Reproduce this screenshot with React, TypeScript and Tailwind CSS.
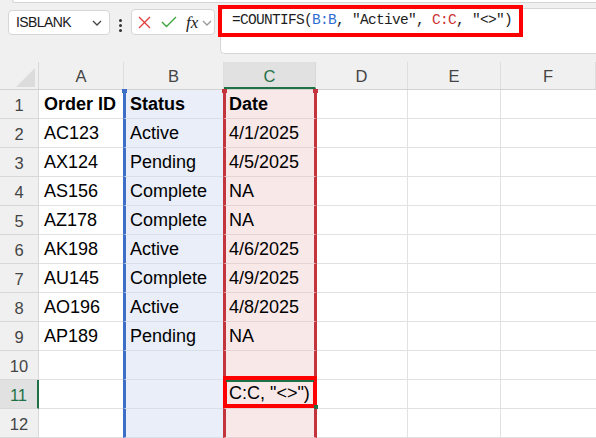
import React from 'react'

const rows = [
  ['Order ID', 'Status', 'Date'],
  ['AC123', 'Active', '4/1/2025'],
  ['AX124', 'Pending', '4/5/2025'],
  ['AS156', 'Complete', 'NA'],
  ['AZ178', 'Complete', 'NA'],
  ['AK198', 'Active', '4/6/2025'],
  ['AU145', 'Complete', '4/9/2025'],
  ['AO196', 'Active', '4/8/2025'],
  ['AP189', 'Pending', 'NA'],
  ['', '', ''],
  ['', '', ''],
  ['', '', ''],
]

function Chevron({ className = '' }: { className?: string }) {
  return (
    <svg className={className} width="10" height="6" viewBox="0 0 10 6" fill="none">
      <path d="M1 1l4 4 4-4" stroke="currentColor" strokeWidth="1.3" />
    </svg>
  )
}

function FormulaBar() {
  return (
    <div className="flex h-[52px]">
      {/* Name box */}
      <div className="ml-[8px] mt-[7px] flex h-[25px] w-[102px] items-center justify-between rounded-[4px] border border-[#d6d6d6] bg-white pl-[7px] pr-[7px]">
        <span className="text-[14px] tracking-[-0.6px] text-[#1a1a1a]">ISBLANK</span>
        <Chevron className="text-[#444]" />
      </div>

      {/* Dots */}
      <div className="ml-[9px] mt-[16px] flex w-[3px] flex-col gap-[2px]">
        <span className="h-[3px] w-[3px] rounded-full bg-[#333]" />
        <span className="h-[3px] w-[3px] rounded-full bg-[#333]" />
        <span className="h-[3px] w-[3px] rounded-full bg-[#333]" />
      </div>

      {/* Cancel / enter / fx */}
      <div className="ml-[9px] mt-[6px] flex h-[26px] w-[84px] items-center rounded-[4px] border border-[#d6d6d6] bg-white pl-[6px]">
        <svg width="13" height="13" viewBox="0 0 13 13" fill="none">
          <path d="M1 1l11 11M12 1L1 12" stroke="#e0403f" strokeWidth="1.4" />
        </svg>
        <svg className="ml-[10px]" width="16" height="12" viewBox="0 0 16 12" fill="none">
          <path d="M1 6l4.5 4.5L15 1" stroke="#3da43d" strokeWidth="1.4" />
        </svg>
        <span className="ml-[9px] font-['Liberation_Serif'] text-[17px] italic leading-none text-[#222]">fx</span>
        <Chevron className="ml-[4px] mt-[2px] text-[#999]" />
      </div>

      {/* Formula input */}
      <div className="relative ml-[5px] mt-[5px] flex-1">
        <div className="h-[46px] rounded-l-[5px] border border-r-0 border-[#d6d6d6] bg-white" />
        <div className="absolute -left-[2px] -top-[3px] flex h-[32px] w-[305px] items-center border-[4px] border-[#ff0000] pl-[10px]">
          <span className="whitespace-pre font-['Liberation_Mono'] text-[14.5px] tracking-[-0.7px] text-[#1e1e1e]">
            =COUNTIFS(<span className="text-[#2f6fd3]">B:B</span>, "Active", <span className="text-[#cf3036]">C:C</span>, "&lt;&gt;")
          </span>
        </div>
      </div>
    </div>
  )
}

function HeaderRow() {
  const cols: [string, string][] = [
    ['A', 'w-[85px]'],
    ['B', 'w-[100px]'],
    ['C', 'w-[92px]'],
    ['D', 'w-[92px]'],
    ['E', 'w-[93px]'],
    ['F', 'flex-1'],
  ]
  return (
    <div className="flex h-[28px] border-b border-[#d2d2d2]">
      <div className="relative w-[39px] border-r border-[#d8d8d8]">
        <svg className="absolute bottom-[2px] right-[3px]" width="19" height="19" viewBox="0 0 19 19">
          <path d="M19 0V19H0Z" fill="#dcdcdc" />
        </svg>
      </div>
      {cols.map(([c, w]) =>
        c === 'C' ? (
          <div key={c} className={`${w} flex items-center justify-center border-b-2 border-r border-b-[#1e7145] border-r-[#d8d8d8] bg-[#e1e1e1] pt-[3px] text-[16.5px] text-[#1e7145]`}>
            {c}
          </div>
        ) : (
          <div key={c} className={`${w} flex items-center justify-center border-r border-[#dedede] pt-[1px] text-[16.5px] text-[#444]`}>
            {c}
          </div>
        )
      )}
    </div>
  )
}

function DataRow({ n, cells }: { n: number; cells: string[] }) {
  const bold = n === 1
  const active = n === 11
  const txt = `text-[18px] text-black whitespace-nowrap ${bold ? 'font-bold' : ''}`
  return (
    <div className="flex h-[29px]">
      <div
        className={
          active
            ? 'flex w-[39px] items-center justify-center border-b border-r-2 border-b-[#d8d8d8] border-r-[#1e7145] bg-[#e1e1e1] pt-[2px] text-[16.5px] text-[#1e7145]'
            : 'flex w-[39px] items-center justify-center border-b border-r border-[#d8d8d8] pt-[2px] text-[16.5px] text-[#444]'
        }
      >
        {n}
      </div>
      <div className={`flex w-[84px] items-end border-b border-[#e1e1e1] bg-white pl-[5px] ${txt}`}>
        {cells[0]}
      </div>
      <div className={`relative flex w-[100px] items-end border-b border-l-[3px] border-b-[#d9dfe9] border-l-[#3d6fc6] bg-[#e9eef8] pl-[4px] ${txt}`}>
        {bold && <span className="absolute -left-[4px] -top-[1px] h-[4px] w-[5px] bg-[#3d6fc6]" />}
        {cells[1]}
      </div>
      <div className={`relative flex w-[94px] items-end border-b border-x-[3px] border-b-[#e8d3d4] border-x-[#c4343c] bg-[#f9e8e8] pl-[3px] ${txt}`}>
        {bold && <span className="absolute -left-[4px] -top-[1px] h-[4px] w-[5px] bg-[#c4343c]" />}
        {bold && <span className="absolute -right-[4px] -top-[1px] h-[4px] w-[5px] bg-[#c4343c]" />}
        {active && (
          <>
            <span className="absolute -left-[3px] -right-[3px] -top-[4px] bottom-0 border-[4px] border-[#ff0000]" />
            <span className="absolute left-0 right-0 top-0 h-[2px] bg-[#1e7145]" />
            <span className="absolute -bottom-[1px] -right-[4px] h-[4px] w-[4px] bg-[#1e7145]" />
            <span className="relative pb-[1px]">C:C, "&lt;&gt;")</span>
          </>
        )}
        {cells[2]}
      </div>
      <div className="w-[91px] border-b border-r border-[#e1e1e1] bg-white" />
      <div className="w-[93px] border-b border-r border-[#e1e1e1] bg-white" />
      <div className="flex-1 border-b border-[#e1e1e1] bg-white" />
    </div>
  )
}

export default function App() {
  return (
    <div className="h-[438px] w-[596px] overflow-hidden bg-[#f0f0f0] font-['Liberation_Sans',sans-serif]">
      <div className="ml-[12px] h-[3px] rounded-bl-[4px] border-b border-l border-[#d4d4d4] bg-white" />
      <FormulaBar />
      <div className="h-[7px]" />
      <HeaderRow />
      {rows.map((cells, i) => (
        <DataRow key={i} n={i + 1} cells={cells} />
      ))}
    </div>
  )
}
